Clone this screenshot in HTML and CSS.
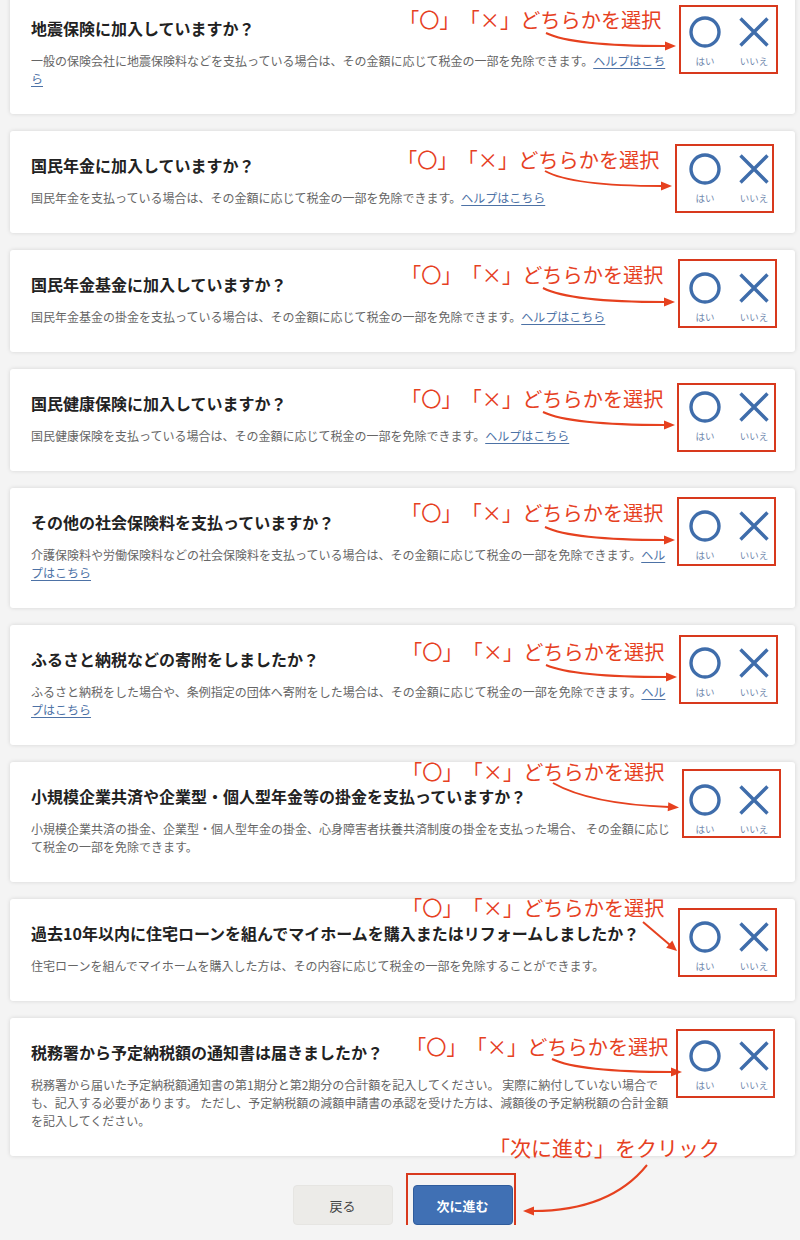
FILE: index.html
```html
<!DOCTYPE html>
<html lang="ja">
<head>
<meta charset="utf-8">
<title>控除の確認</title>
<link rel="stylesheet" href="styles.css">
</head>
<body>
<div class="page">
  <div class="list">

    <div class="card a1">
      <div class="q-text">
        <h2 class="q-title">地震保険に加入していますか？</h2>
        <p class="q-desc">一般の保険会社に地震保険料などを支払っている場合は、その金額に応じて税金の一部を免除できます。<a class="help" href="#">ヘルプはこちら</a></p>
      </div>
      <div class="choices">
        <div class="choice"><svg class="ico" viewBox="0 0 32 32"><circle cx="16" cy="16" r="14" /></svg><span class="lbl">はい</span></div>
        <div class="choice"><svg class="ico" viewBox="0 0 32 32"><path d="M2.5 2.5 L29.5 29.5 M29.5 2.5 L2.5 29.5" /></svg><span class="lbl">いいえ</span></div>
      </div>
      <div class="anno">
        <span class="anno-text">「〇」「×」どちらかを選択</span>
        <svg class="anno-arrow" viewBox="10 0 785 100"><path class="ln" d="M546 39 Q573 52 666 52" /><polygon points="676,52 665,47.5 665,56.5" /></svg>
        <div class="anno-box"></div>
      </div>
    </div>

    <div class="card a2">
      <div class="q-text">
        <h2 class="q-title">国民年金に加入していますか？</h2>
        <p class="q-desc">国民年金を支払っている場合は、その金額に応じて税金の一部を免除できます。<a class="help" href="#">ヘルプはこちら</a></p>
      </div>
      <div class="choices">
        <div class="choice"><svg class="ico" viewBox="0 0 32 32"><circle cx="16" cy="16" r="14" /></svg><span class="lbl">はい</span></div>
        <div class="choice"><svg class="ico" viewBox="0 0 32 32"><path d="M2.5 2.5 L29.5 29.5 M29.5 2.5 L2.5 29.5" /></svg><span class="lbl">いいえ</span></div>
      </div>
      <div class="anno">
        <span class="anno-text">「〇」「×」どちらかを選択</span>
        <svg class="anno-arrow" viewBox="10 0 785 100"><path class="ln" d="M545 40 Q572 55 662 55" /><polygon points="672,55 661,50.5 661,59.5" /></svg>
        <div class="anno-box"></div>
      </div>
    </div>

    <div class="card a3">
      <div class="q-text">
        <h2 class="q-title">国民年金基金に加入していますか？</h2>
        <p class="q-desc">国民年金基金の掛金を支払っている場合は、その金額に応じて税金の一部を免除できます。<a class="help" href="#">ヘルプはこちら</a></p>
      </div>
      <div class="choices">
        <div class="choice"><svg class="ico" viewBox="0 0 32 32"><circle cx="16" cy="16" r="14" /></svg><span class="lbl">はい</span></div>
        <div class="choice"><svg class="ico" viewBox="0 0 32 32"><path d="M2.5 2.5 L29.5 29.5 M29.5 2.5 L2.5 29.5" /></svg><span class="lbl">いいえ</span></div>
      </div>
      <div class="anno">
        <span class="anno-text">「〇」「×」どちらかを選択</span>
        <svg class="anno-arrow" viewBox="10 0 785 100"><path class="ln" d="M543 38 Q570 52 665 52" /><polygon points="675,52 664,47.5 664,56.5" /></svg>
        <div class="anno-box"></div>
      </div>
    </div>

    <div class="card a4">
      <div class="q-text">
        <h2 class="q-title">国民健康保険に加入していますか？</h2>
        <p class="q-desc">国民健康保険を支払っている場合は、その金額に応じて税金の一部を免除できます。<a class="help" href="#">ヘルプはこちら</a></p>
      </div>
      <div class="choices">
        <div class="choice"><svg class="ico" viewBox="0 0 32 32"><circle cx="16" cy="16" r="14" /></svg><span class="lbl">はい</span></div>
        <div class="choice"><svg class="ico" viewBox="0 0 32 32"><path d="M2.5 2.5 L29.5 29.5 M29.5 2.5 L2.5 29.5" /></svg><span class="lbl">いいえ</span></div>
      </div>
      <div class="anno">
        <span class="anno-text">「〇」「×」どちらかを選択</span>
        <svg class="anno-arrow" viewBox="10 0 785 100"><path class="ln" d="M543 43 Q570 56 665 56" /><polygon points="675,56 664,51.5 664,60.5" /></svg>
        <div class="anno-box"></div>
      </div>
    </div>

    <div class="card a5">
      <div class="q-text">
        <h2 class="q-title">その他の社会保険料を支払っていますか？</h2>
        <p class="q-desc">介護保険料や労働保険料などの社会保険料を支払っている場合は、その金額に応じて税金の一部を免除できます。<a class="help" href="#">ヘルプはこちら</a></p>
      </div>
      <div class="choices">
        <div class="choice"><svg class="ico" viewBox="0 0 32 32"><circle cx="16" cy="16" r="14" /></svg><span class="lbl">はい</span></div>
        <div class="choice"><svg class="ico" viewBox="0 0 32 32"><path d="M2.5 2.5 L29.5 29.5 M29.5 2.5 L2.5 29.5" /></svg><span class="lbl">いいえ</span></div>
      </div>
      <div class="anno">
        <span class="anno-text">「〇」「×」どちらかを選択</span>
        <svg class="anno-arrow" viewBox="10 0 785 100"><path class="ln" d="M545 39 Q572 52 665 52" /><polygon points="675,52 664,47.5 664,56.5" /></svg>
        <div class="anno-box"></div>
      </div>
    </div>

    <div class="card a6">
      <div class="q-text">
        <h2 class="q-title">ふるさと納税などの寄附をしましたか？</h2>
        <p class="q-desc">ふるさと納税をした場合や、条例指定の団体へ寄附をした場合は、その金額に応じて税金の一部を免除できます。<a class="help" href="#">ヘルプはこちら</a></p>
      </div>
      <div class="choices">
        <div class="choice"><svg class="ico" viewBox="0 0 32 32"><circle cx="16" cy="16" r="14" /></svg><span class="lbl">はい</span></div>
        <div class="choice"><svg class="ico" viewBox="0 0 32 32"><path d="M2.5 2.5 L29.5 29.5 M29.5 2.5 L2.5 29.5" /></svg><span class="lbl">いいえ</span></div>
      </div>
      <div class="anno">
        <span class="anno-text">「〇」「×」どちらかを選択</span>
        <svg class="anno-arrow" viewBox="10 0 785 100"><path class="ln" d="M546 40 Q573 52 667 52" /><polygon points="677,52 666,47.5 666,56.5" /></svg>
        <div class="anno-box"></div>
      </div>
    </div>

    <div class="card a7">
      <div class="q-text">
        <h2 class="q-title">小規模企業共済や企業型・個人型年金等の掛金を支払っていますか？</h2>
        <p class="q-desc">小規模企業共済の掛金、企業型・個人型年金の掛金、心身障害者扶養共済制度の掛金を支払った場合、 その金額に応じて税金の一部を免除できます。</p>
      </div>
      <div class="choices">
        <div class="choice"><svg class="ico" viewBox="0 0 32 32"><circle cx="16" cy="16" r="14" /></svg><span class="lbl">はい</span></div>
        <div class="choice"><svg class="ico" viewBox="0 0 32 32"><path d="M2.5 2.5 L29.5 29.5 M29.5 2.5 L2.5 29.5" /></svg><span class="lbl">いいえ</span></div>
      </div>
      <div class="anno">
        <span class="anno-text">「〇」「×」どちらかを選択</span>
        <svg class="anno-arrow" viewBox="10 0 785 100"><path class="ln" d="M553 21 Q590 42 669 45" /><polygon points="679,45.5 668.3,40.2 667.7,49.2" /></svg>
        <div class="anno-box"></div>
      </div>
    </div>

    <div class="card a8">
      <div class="q-text">
        <h2 class="q-title">過去10年以内に住宅ローンを組んでマイホームを購入またはリフォームしましたか？</h2>
        <p class="q-desc">住宅ローンを組んでマイホームを購入した方は、その内容に応じて税金の一部を免除することができます。</p>
      </div>
      <div class="choices">
        <div class="choice"><svg class="ico" viewBox="0 0 32 32"><circle cx="16" cy="16" r="14" /></svg><span class="lbl">はい</span></div>
        <div class="choice"><svg class="ico" viewBox="0 0 32 32"><path d="M2.5 2.5 L29.5 29.5 M29.5 2.5 L2.5 29.5" /></svg><span class="lbl">いいえ</span></div>
      </div>
      <div class="anno">
        <span class="anno-text">「〇」「×」どちらかを選択</span>
        <svg class="anno-arrow" viewBox="10 0 785 100"><path class="ln" d="M643 23 L670 46" /><polygon points="677,52 666.2,48.8 672.3,41.6" /></svg>
        <div class="anno-box"></div>
      </div>
    </div>

    <div class="card a9">
      <div class="q-text">
        <h2 class="q-title">税務署から予定納税額の通知書は届きましたか？</h2>
        <p class="q-desc">税務署から届いた予定納税額通知書の第1期分と第2期分の合計額を記入してください。 実際に納付していない場合でも、記入する必要があります。 ただし、予定納税額の減額申請書の承認を受けた方は、減額後の予定納税額の合計金額を記入してください。</p>
      </div>
      <div class="choices">
        <div class="choice"><svg class="ico" viewBox="0 0 32 32"><circle cx="16" cy="16" r="14" /></svg><span class="lbl">はい</span></div>
        <div class="choice"><svg class="ico" viewBox="0 0 32 32"><path d="M2.5 2.5 L29.5 29.5 M29.5 2.5 L2.5 29.5" /></svg><span class="lbl">いいえ</span></div>
      </div>
      <div class="anno">
        <span class="anno-text">「〇」「×」どちらかを選択</span>
        <svg class="anno-arrow" viewBox="10 0 785 100"><path class="ln" d="M552 41 Q579 54 672 54" /><polygon points="682,54 671,49.5 671,58.5" /></svg>
        <div class="anno-box"></div>
      </div>
    </div>

  </div>

  <div class="actions">
    <button class="btn btn-back" type="button">戻る</button>
    <button class="btn btn-next" type="button">次に進む</button>
    <span class="next-text">「次に進む」をクリック</span>
    <svg class="next-arrow" viewBox="10 1125 785 120"><path class="ln" d="M647 1165 Q610 1211 533 1211" /><polygon points="523,1211 534,1206.5 534,1215.5" /></svg>
    <div class="next-box"></div>
  </div>
</div>
</body>
</html>
```

FILE: styles.css
```css
* { box-sizing: border-box; }

html, body {
  margin: 0;
  padding: 0;
  background: #f4f4f4;
}

body {
  font-family: "Noto Sans CJK JP", "Noto Sans", "Liberation Sans", sans-serif;
  color: #222;
  overflow: hidden;
  text-spacing-trim: space-all;
}

.page {
  width: 785px;
  margin-left: 10px;
}

.list {
  margin-top: -6px;
  display: flex;
  flex-direction: column;
  gap: 17px;
}

.card {
  position: relative;
  display: flex;
  align-items: flex-start;
  background: #fff;
  border-radius: 3px;
  box-shadow: 0 0 4px rgba(0, 0, 0, 0.13);
  padding: 22px 21px 26px 21px;
}

.q-text {
  width: 642px;
  flex: none;
}

.q-title {
  margin: 0 0 12px;
  font-size: 16px;
  line-height: 24px;
  font-weight: 700;
  color: #222;
}

.q-desc {
  margin: 0;
  font-size: 12px;
  line-height: 18px;
  color: #666;
}

.help {
  color: #4d72a6;
  text-decoration: underline;
  text-underline-offset: 2px;
}

.choices {
  margin-left: auto;
  display: flex;
  gap: 9px;
}

.choice {
  width: 40px;
  display: flex;
  flex-direction: column;
  align-items: center;
}

.ico {
  width: 32px;
  height: 32px;
  fill: none;
  stroke: #3f6dab;
  stroke-width: 3.4;
}

.lbl {
  margin-top: 6px;
  font-size: 9.5px;
  line-height: 14px;
  color: #6f87ad;
  white-space: nowrap;
}

/* annotation overlay */
.anno {
  position: absolute;
  inset: 0;
  pointer-events: none;
}

.anno-text {
  position: absolute;
  left: var(--tx);
  top: var(--ty);
  font-size: 20.2px;
  line-height: 20px;
  color: #e6411f;
  white-space: nowrap;
}

.anno-arrow {
  position: absolute;
  left: 0;
  top: 0;
  width: 785px;
  height: 100px;
  overflow: visible;
}

.ln {
  fill: none;
  stroke: #e6411f;
  stroke-width: 2;
}

.anno-arrow polygon,
.next-arrow polygon {
  fill: #e6411f;
}

.anno-box {
  position: absolute;
  left: var(--bx);
  top: var(--by);
  width: 99px;
  height: 69px;
  border: 2px solid #d8391d;
}

.a1 { --tx: 389px; --ty: 16px; --bx: 669px; --by: 11px; }
.a2 { --tx: 387px; --ty: 19px; --bx: 665px; --by: 13px; }
.a3 { --tx: 391px; --ty: 15px; --bx: 668px; --by: 9px; }
.a4 { --tx: 391px; --ty: 20px; --bx: 667px; --by: 14px; }
.a5 { --tx: 391px; --ty: 15px; --bx: 667px; --by: 9px; }
.a6 { --tx: 392px; --ty: 17px; --bx: 669px; --by: 10px; }
.a7 { --tx: 392px; --ty: 0px;  --bx: 672px; --by: 7px; }
.a8 { --tx: 392px; --ty: -1px; --bx: 668px; --by: 9px; }
.a9 { --tx: 396px; --ty: 19px; --bx: 666px; --by: 11px; }

/* actions */
.actions {
  position: relative;
  margin-top: 29px;
  display: flex;
  justify-content: center;
  gap: 20px;
}

.btn {
  width: 100px;
  height: 40px;
  border-radius: 4px;
  font-family: inherit;
  font-size: 13px;
  cursor: pointer;
}

.btn-back {
  background: #ecebe8;
  border: 1px solid #e6e5e2;
  color: #444;
}

.btn-next {
  background: #4070b4;
  border: 1px solid #2f5c9c;
  color: #fff;
  font-weight: 700;
}

.next-text {
  position: absolute;
  left: 479px;
  top: -48px;
  font-size: 21px;
  line-height: 20px;
  color: #e6411f;
  white-space: nowrap;
}

.next-arrow {
  position: absolute;
  left: 0;
  top: -60px;
  width: 785px;
  height: 120px;
  overflow: visible;
}

.next-box {
  position: absolute;
  left: 396px;
  top: -12px;
  width: 110px;
  height: 60px;
  border: 2px solid #d8391d;
}
```
